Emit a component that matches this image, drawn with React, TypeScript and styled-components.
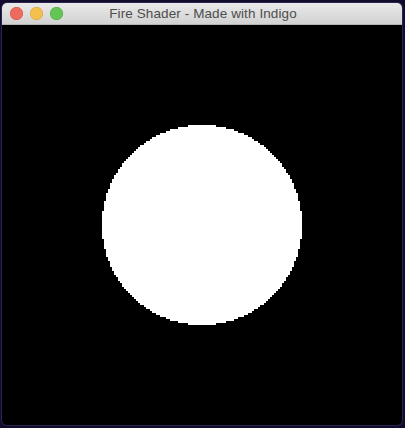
import React from "react";
import styled, { createGlobalStyle } from "styled-components";

const Global = createGlobalStyle`
  html, body { margin: 0; padding: 0; background: #110c2c; }
  body { width: 405px; height: 428px; overflow: hidden; font-family: "Helvetica Neue", "Liberation Sans", Arial, sans-serif; }
`;

const Desktop = styled.div`
  width: 405px;
  height: 428px;
  padding: 3px 3px 0 2px;
  box-sizing: border-box;
  background: #110c2c;
`;

const Window = styled.div`
  width: 400px;
  height: 422px;
  display: flex;
  flex-direction: column;
  border-radius: 5px;
  overflow: hidden;
  box-shadow: 0 0 0 1px #2a2550;
`;

const TitleBar = styled.div`
  position: relative;
  height: 22px;
  flex: none;
  display: flex;
  align-items: center;
  justify-content: center;
  background: linear-gradient(#e9e9e9, #d2d2d2);
  border-bottom: 1px solid #b4b4b4;
  box-sizing: border-box;
`;

const Lights = styled.div`
  position: absolute;
  left: 8px;
  top: 4px;
  display: flex;
  gap: 7px;
`;

const Light = styled.span<{ $c: string; $b: string }>`
  width: 13px;
  height: 13px;
  border-radius: 50%;
  background: ${(p) => p.$c};
  box-shadow: inset 0 0 0 0.5px ${(p) => p.$b};
`;

const Title = styled.div`
  font-size: 13.5px;
  color: #4d4d4d;
  letter-spacing: 0.1px;
  margin-left: 2px;
`;

const Canvas = styled.div`
  flex: 1;
  background: #000;
  display: flex;
  align-items: center;
  justify-content: center;
`;

function PixelCircle() {
  const cells: React.ReactNode[] = [];
  const r = 100;
  const step = 2;
  for (let y = -r; y < r; y += step) {
    const cy = y + step / 2;
    const half = Math.sqrt(Math.max(0, r * r - cy * cy));
    const w = Math.round(half / step) * step;
    if (w > 0) cells.push(<rect key={y} x={r - w} y={y + r} width={w * 2} height={step} fill="#fff" />);
  }
  return (
    <svg width={200} height={200} viewBox="0 0 200 200" shapeRendering="crispEdges">
      {cells}
    </svg>
  );
}

export default function App() {
  return (
    <>
      <Global />
      <Desktop>
        <Window>
          <TitleBar>
            <Lights>
              <Light $c="#ed6a5e" $b="#d2554a" />
              <Light $c="#f5bf4f" $b="#d6a243" />
              <Light $c="#62c554" $b="#53a83f" />
            </Lights>
            <Title>Fire Shader - Made with Indigo</Title>
          </TitleBar>
          <Canvas>
            <PixelCircle />
          </Canvas>
        </Window>
      </Desktop>
    </>
  );
}
